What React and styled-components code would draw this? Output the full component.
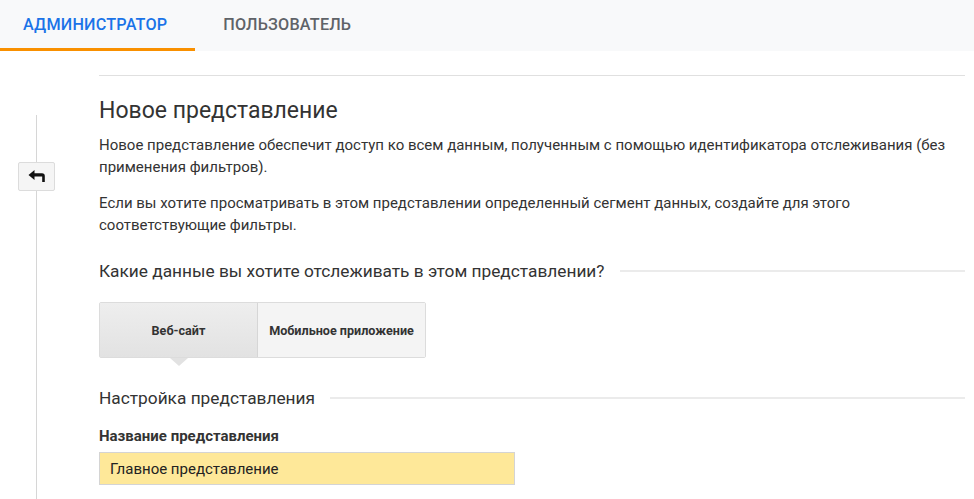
import React from "react";
import styled, { createGlobalStyle } from "styled-components";

const Global = createGlobalStyle`
  html, body { margin: 0; padding: 0; background: #fff; }
  body { font-family: Roboto, "Noto Sans", Arial, sans-serif; color: #333; }
  * { box-sizing: border-box; }
`;

const Page = styled.div`
  width: 974px;
  height: 499px;
  overflow: hidden;
  display: flex;
  flex-direction: column;
`;

const TabBar = styled.div`
  height: 51px;
  background: #f8f9fa;
  display: flex;
  flex-shrink: 0;
`;

const Tab = styled.div`
  height: 51px;
  padding: 0 ${(p) => (p.$active ? "28px" : "22px")} 0 ${(p) => (p.$active ? "23px" : "28px")};
  display: flex;
  align-items: center;
  font-family: Roboto, Arial, sans-serif;
  font-size: 16.2px;
  font-weight: 500;
  letter-spacing: 0.2px;
  color: ${(p) => (p.$active ? "#1a73e8" : "#5f6368")};
  border-bottom: 3px solid ${(p) => (p.$active ? "#f99000" : "transparent")};
`;

const Body = styled.div`
  flex: 1;
  display: flex;
`;

const Rail = styled.div`
  width: 99px;
  flex-shrink: 0;
  position: relative;
  display: flex;
  flex-direction: column;
  align-items: flex-start;
  padding-top: 64px;
`;

const RailLine = styled.div`
  position: absolute;
  left: 36px;
  top: 64px;
  bottom: 0;
  width: 1px;
  background: #d6d6d6;
`;

const BackButton = styled.button`
  position: relative;
  margin: 47px 0 0 18px;
  width: 37px;
  height: 29px;
  border: 1px solid #dcdcdc;
  border-radius: 2px;
  background: #f5f5f5;
  display: flex;
  align-items: center;
  justify-content: center;
  padding: 0;
  z-index: 1;
`;

const Content = styled.div`
  flex: 1;
  padding-right: 9px;
  display: flex;
  flex-direction: column;
`;

const TopRule = styled.div`
  margin-top: 24px;
  height: 1px;
  background: #e0e0e0;
`;

const Title = styled.h1`
  margin: 21px 0 0;
  font-size: 23px;
  font-weight: 400;
  line-height: 28px;
  color: #333;
`;

const Para = styled.p`
  margin: ${(p) => p.$mt}px 0 0;
  font-size: 15px;
  line-height: 22px;
  color: #333;
  max-width: 866px;
`;

const SectionHead = styled.div`
  display: flex;
  align-items: center;
  margin-top: ${(p) => p.$mt}px;
  gap: 15px;
  font-size: 17.3px;
  line-height: 24px;
  color: #333;
  &::after {
    content: "";
    flex: 1;
    height: 2px;
    background: #ebebeb;
  }
`;

const Toggle = styled.div`
  margin-top: 19px;
  display: flex;
  align-self: flex-start;
  border: 1px solid #dcdcdc;
  border-radius: 2px;
`;

const ToggleBtn = styled.div`
  position: relative;
  width: ${(p) => p.$w}px;
  height: 54px;
  display: flex;
  align-items: center;
  justify-content: center;
  font-size: 12.6px;
  font-weight: 700;
  color: #333;
  background: ${(p) => (p.$active ? "linear-gradient(#eeeeee, #e2e2e2)" : "#f4f4f4")};
  border-right: ${(p) => (p.$last ? "none" : "1px solid #d6d6d6")};
  ${(p) =>
    p.$active &&
    `
    &::after {
      content: "";
      position: absolute;
      left: 50%;
      bottom: -9px;
      margin-left: -9px;
      border-left: 9px solid transparent;
      border-right: 9px solid transparent;
      border-top: 8px solid #e2e2e2;
    }
  `}
`;

const Label = styled.div`
  margin-top: 16px;
  font-size: 15px;
  font-weight: 700;
  line-height: 20px;
  color: #333;
`;

const Input = styled.div`
  margin-top: 6px;
  width: 416px;
  height: 33px;
  background: #fee899;
  border: 1px solid #d4d4d4;
  display: flex;
  align-items: center;
  padding-left: 10px;
  font-size: 15px;
  color: #222;
`;

export default function App() {
  return (
    <Page>
      <Global />
      <TabBar>
        <Tab $active>АДМИНИСТРАТОР</Tab>
        <Tab>ПОЛЬЗОВАТЕЛЬ</Tab>
      </TabBar>
      <Body>
        <Rail>
          <RailLine />
          <BackButton aria-label="Назад">
            <svg width="18" height="14" viewBox="0 0 18 14">
              <path d="M0.5 5 L6.5 0 L6.5 3.3 L14 3.3 Q16.8 3.3 16.8 6 L16.8 12 L14.2 12 L14.2 6.6 L6.5 6.6 L6.5 10 Z" fill="#111" />
            </svg>
          </BackButton>
        </Rail>
        <Content>
          <TopRule />
          <Title>Новое представление</Title>
          <Para $mt={9}>
            Новое представление обеспечит доступ ко всем данным, полученным с помощью идентификатора отслеживания (без применения фильтров).
          </Para>
          <Para $mt={14}>
            Если вы хотите просматривать в этом представлении определенный сегмент данных, создайте для этого соответствующие фильтры.
          </Para>
          <SectionHead $mt={23}>Какие данные вы хотите отслеживать в этом представлении?</SectionHead>
          <Toggle>
            <ToggleBtn $w={158} $active>Веб-сайт</ToggleBtn>
            <ToggleBtn $w={167} $last>Мобильное приложение</ToggleBtn>
          </Toggle>
          <SectionHead $mt={28}>Настройка представления</SectionHead>
          <Label>Название представления</Label>
          <Input>Главное представление</Input>
        </Content>
      </Body>
    </Page>
  );
}
